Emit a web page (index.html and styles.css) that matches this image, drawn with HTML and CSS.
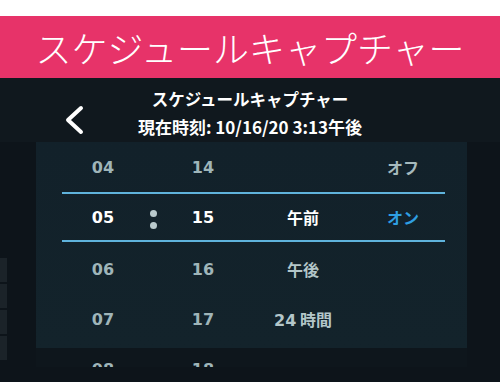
FILE: index.html
```html
<!DOCTYPE html>
<html lang="ja">
<head>
<meta charset="utf-8">
<link rel="stylesheet" href="styles.css">
</head>
<body>
<div class="topstrip"></div>
<div class="banner">スケジュールキャプチャー</div>
<div class="screen">
  <div class="header">
    <div class="back">
      <svg width="24" height="30" viewBox="0 0 24 30"><polyline points="18,3 5,15 18,27" fill="none" stroke="#ffffff" stroke-width="4" stroke-linecap="round" stroke-linejoin="round"/></svg>
    </div>
    <div class="titles">
      <div class="title">スケジュールキャプチャー</div>
      <div class="subtitle">現在時刻: 10/16/20 3:13午後</div>
    </div>
    <div></div>
  </div>
  <div class="body">
    <div class="bezel">
      <span class="seg"></span><span class="seg"></span><span class="seg"></span><span class="seg"></span>
    </div>
    <div class="picker">
      <div class="row">
        <span class="cell num">04</span><span class="cell"></span><span class="cell num">14</span><span class="cell ampm"></span><span class="cell sw">オフ</span>
      </div>
      <div class="row selected">
        <span class="cell num">05</span><span class="cell"><span class="colon"><i></i><i></i></span></span><span class="cell num">15</span><span class="cell ampm">午前</span><span class="cell sw on">オン</span>
      </div>
      <div class="row">
        <span class="cell num">06</span><span class="cell"></span><span class="cell num">16</span><span class="cell ampm">午後</span><span class="cell sw"></span>
      </div>
      <div class="row">
        <span class="cell num">07</span><span class="cell"></span><span class="cell num">17</span><span class="cell ampm"><span class="num">24</span> 時間</span><span class="cell sw"></span>
      </div>
      <div class="row">
        <span class="cell num">08</span><span class="cell"></span><span class="cell num">18</span><span class="cell ampm"></span><span class="cell sw"></span>
      </div>
    </div>
  </div>
</div>
</body>
</html>
```
FILE: styles.css
```css
html, body {
  margin: 0;
  padding: 0;
}
body {
  width: 500px;
  height: 382px;
  overflow: hidden;
  background: #ffffff;
  font-family: "Noto Sans CJK JP", "Noto Sans", sans-serif;
}
.topstrip {
  height: 16px;
  background: #ffffff;
}
.banner {
  height: 62px;
  background: #e73369;
  color: #ffffff;
  font-size: 36px;
  font-weight: 200;
  line-height: 62px;
  text-align: center;
}
.screen {
  height: 304px;
  background: #10181e;
}
.header {
  height: 64px;
  display: grid;
  grid-template-columns: 1fr auto 1fr;
  box-sizing: border-box;
  padding-top: 9px;
}
.back {
  padding-left: 63px;
  padding-top: 18px;
}
.back svg {
  display: block;
}
.titles {
  text-align: center;
  color: #ffffff;
}
.title {
  font-size: 16.5px;
  font-weight: 700;
  line-height: 24px;
}
.subtitle {
  margin-top: 4px;
  font-size: 17px;
  font-weight: 700;
  line-height: 24px;
}
.body {
  height: 240px;
  display: flex;
  background: #0d141a;
}
.bezel {
  width: 7px;
  padding-top: 116px;
  display: flex;
  flex-direction: column;
  gap: 2px;
}
.seg {
  display: block;
  height: 24px;
  background: #1b2329;
}
.picker {
  margin-left: 29px;
  width: 431px;
  height: 225px;
  overflow: hidden;
  background: linear-gradient(#12212a 0, #13232b 206px, #0e161c 206px);
}
.row {
  height: 50px;
  display: grid;
  grid-template-columns: 50px 50px 50px 125px 100px;
  padding-left: 42px;
  align-items: center;
  color: #9fb5b9;
  font-size: 16px;
  font-weight: 700;
}
.row.selected {
  height: 46px;
  margin: 0 22px 0 26px;
  padding-left: 16px;
  border-top: 2px solid #5fb3dc;
  border-bottom: 2px solid #5fb3dc;
  color: #ffffff;
}
.row.selected + .row {
  margin-top: 2px;
}
.cell {
  text-align: center;
  display: block;
}
.num {
  font-family: "DejaVu Sans", "Noto Sans", sans-serif;
  font-weight: 700;
  font-size: 16px;
}
.ampm {
  padding-left: 25px;
  color: #b3c6c9;
}
.selected .ampm {
  color: #ffffff;
}
.sw {
  color: #a6babd;
}
.sw.on {
  color: #2e9fe2;
}
.colon {
  display: inline-flex;
  flex-direction: column;
  gap: 5px;
  vertical-align: middle;
}
.colon i {
  display: block;
  width: 7px;
  height: 7px;
  border-radius: 50%;
  background: #b9c9cc;
}
```
